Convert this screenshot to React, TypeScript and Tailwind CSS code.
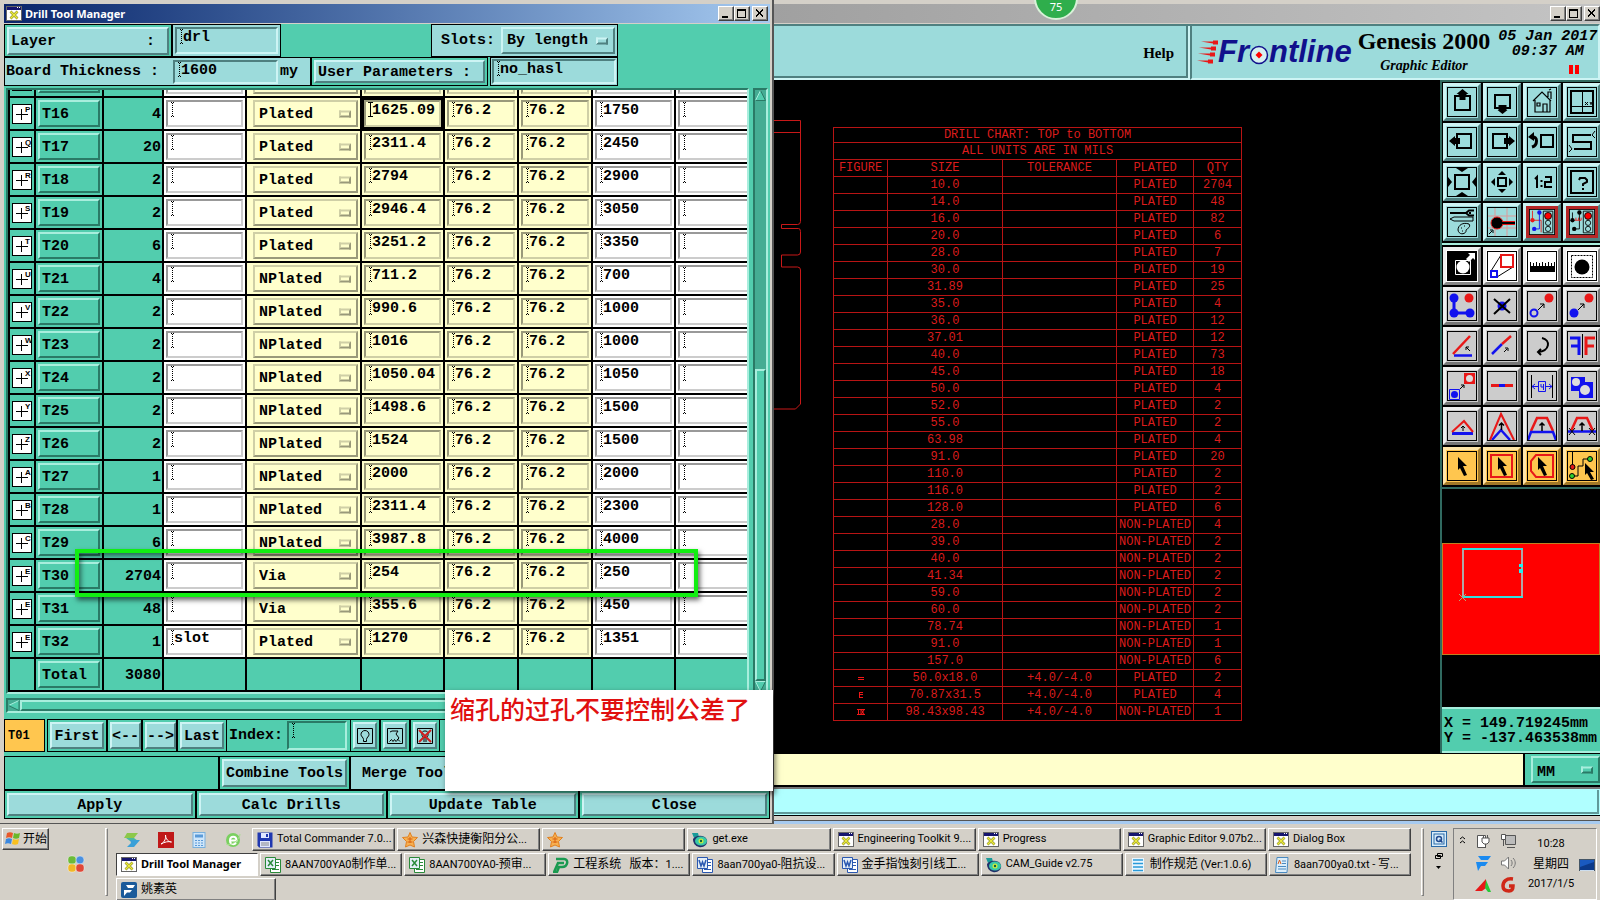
import React from "react";
import clsx from "clsx";

interface ToolRow {
  id: string;
  mark: string;
  qty: string;
  note?: string;
  type: string;
  size: string;
  bit: string;
}

const TOOLS: ToolRow[] = [
  { id: "", mark: "", qty: "", type: "", size: "", bit: "" },
  { id: "T16", mark: "P", qty: "4", type: "Plated", size: "1625.09", bit: "1750" },
  { id: "T17", mark: "Q", qty: "20", type: "Plated", size: "2311.4", bit: "2450" },
  { id: "T18", mark: "R", qty: "2", type: "Plated", size: "2794", bit: "2900" },
  { id: "T19", mark: "S", qty: "2", type: "Plated", size: "2946.4", bit: "3050" },
  { id: "T20", mark: "T", qty: "6", type: "Plated", size: "3251.2", bit: "3350" },
  { id: "T21", mark: "U", qty: "4", type: "NPlated", size: "711.2", bit: "700" },
  { id: "T22", mark: "V", qty: "2", type: "NPlated", size: "990.6", bit: "1000" },
  { id: "T23", mark: "W", qty: "2", type: "NPlated", size: "1016", bit: "1000" },
  { id: "T24", mark: "X", qty: "2", type: "NPlated", size: "1050.04", bit: "1050" },
  { id: "T25", mark: "Y", qty: "2", type: "NPlated", size: "1498.6", bit: "1500" },
  { id: "T26", mark: "Z", qty: "2", type: "NPlated", size: "1524", bit: "1500" },
  { id: "T27", mark: "A", qty: "1", type: "NPlated", size: "2000", bit: "2000" },
  { id: "T28", mark: "B", qty: "1", type: "NPlated", size: "2311.4", bit: "2300" },
  { id: "T29", mark: "C", qty: "6", type: "NPlated", size: "3987.8", bit: "4000" },
  { id: "T30", mark: "E", qty: "2704", type: "Via", size: "254", bit: "250" },
  { id: "T31", mark: "E", qty: "48", type: "Via", size: "355.6", bit: "450" },
  { id: "T32", mark: "E", qty: "1", note: "slot", type: "Plated", size: "1270", bit: "1351" },
];

// size, tolerance, plated, qty
const CHART: [string, string, string, string][] = [
  ["10.0", "", "PLATED", "2704"],
  ["14.0", "", "PLATED", "48"],
  ["16.0", "", "PLATED", "82"],
  ["20.0", "", "PLATED", "6"],
  ["28.0", "", "PLATED", "7"],
  ["30.0", "", "PLATED", "19"],
  ["31.89", "", "PLATED", "25"],
  ["35.0", "", "PLATED", "4"],
  ["36.0", "", "PLATED", "12"],
  ["37.01", "", "PLATED", "12"],
  ["40.0", "", "PLATED", "73"],
  ["45.0", "", "PLATED", "18"],
  ["50.0", "", "PLATED", "4"],
  ["52.0", "", "PLATED", "2"],
  ["55.0", "", "PLATED", "2"],
  ["63.98", "", "PLATED", "4"],
  ["91.0", "", "PLATED", "20"],
  ["110.0", "", "PLATED", "2"],
  ["116.0", "", "PLATED", "2"],
  ["128.0", "", "PLATED", "6"],
  ["28.0", "", "NON-PLATED", "4"],
  ["39.0", "", "NON-PLATED", "2"],
  ["40.0", "", "NON-PLATED", "2"],
  ["41.34", "", "NON-PLATED", "2"],
  ["59.0", "", "NON-PLATED", "2"],
  ["60.0", "", "NON-PLATED", "2"],
  ["78.74", "", "NON-PLATED", "1"],
  ["91.0", "", "NON-PLATED", "1"],
  ["157.0", "", "NON-PLATED", "6"],
  ["50.0x18.0", "+4.0/-4.0", "PLATED", "2"],
  ["70.87x31.5", "+4.0/-4.0", "PLATED", "4"],
  ["98.43x98.43", "+4.0/-4.0", "NON-PLATED", "1"],
];

const MONO = "font-['Liberation_Mono',monospace] text-[15px] leading-[15px] font-bold";
const UI = "font-['Roboto','Noto_Sans_CJK_SC',sans-serif] text-[11px]";

// Motif bevels, one pair for each colour family
const TEAL_UP = "border-2 border-t-[#a8eedd] border-l-[#a8eedd] border-b-[#2a7a66] border-r-[#2a7a66]";
const TEAL_IN = "border-2 border-t-[#2a7a66] border-l-[#2a7a66] border-b-[#a8eedd] border-r-[#a8eedd]";
const BLUE_UP = "border-2 border-t-[#cdf4f4] border-l-[#cdf4f4] border-b-[#4f8080] border-r-[#4f8080]";
const BLUE_IN = "border-2 border-t-[#4f8080] border-l-[#4f8080] border-b-[#cdf4f4] border-r-[#cdf4f4]";
const YELLOW_UP = "border-2 border-t-[#cfcfa6] border-l-[#cfcfa6] border-b-[#99997a] border-r-[#99997a]";
const YELLOW_IN = "border-2 border-t-[#99997a] border-l-[#99997a] border-b-[#cfcfa6] border-r-[#cfcfa6]";
const WHITE_IN = "border-2 border-t-[#999] border-l-[#999] border-b-[#ccc] border-r-[#ccc]";
const WIN_UP = "border border-t-white border-l-white border-b-[#404040] border-r-[#404040] shadow-[inset_-1px_-1px_0_#808080]";

const Caret = ({ active }: { active?: boolean }) => (
  <svg className="h-[15px] w-[5px] shrink-0" viewBox="0 0 5 15" fill="none" stroke="#000" shapeRendering="crispEdges">
    {active ? (
      <path d="M0 .5h5M2.500 1v13M0 14.500h5" />
    ) : (
      <path d="M1 .5h1M3 .5h1M2.500 1v13M1 14.500h1M3 14.500h1" strokeDasharray="1 1" />
    )}
  </svg>
);

interface FieldProps {
  label: string;
  value?: string;
  className: string;
  active?: boolean;
}

const Field: React.FC<FieldProps> = ({ label, value = "", className, active }) => (
  <div className={clsx("flex items-start pl-0.5", className)}>
    <Caret active={active} />
    <input
      aria-label={label}
      defaultValue={value}
      className={clsx("-ml-px h-[17px] w-full min-w-0 bg-transparent p-0 outline-none", MONO)}
    />
  </div>
);

interface PickProps {
  label: string;
  value: string;
  className: string;
  knob: string;
}

const Pick: React.FC<PickProps> = ({ label, value, className, knob }) => (
  <div className={clsx("relative", className)}>
    <select aria-label={label} className={clsx("h-full w-full appearance-none bg-transparent pl-1 outline-none", MONO)}>
      <option>{value}</option>
    </select>
    <span className={clsx("pointer-events-none absolute top-1/2 right-[5px] h-[7px] w-3 -translate-y-1/2", knob)} />
  </div>
);

const XIcon = () => (
  <svg className="h-[15px] w-4 shrink-0" viewBox="0 0 16 15">
    <rect x=".5" y=".5" width="15" height="14" fill="#fff" stroke="#666" />
    <rect x="1" y="1" width="14" height="3" fill="#15156e" />
    <path d="M11 1.500h1M13 1.500h1" stroke="#fff" />
    <path d="M4.500 5.500l7 7M11.500 5.500l-7 7" stroke="#8d8d2a" strokeWidth="2.600" />
    <path d="M4.500 5.500l7 7M11.500 5.500l-7 7" stroke="#ecec3c" strokeWidth="1.400" />
  </svg>
);

const WindowButtons = () => (
  <div className="flex items-center">
    {["min", "max", "close"].map((kind) => (
      <button
        key={kind}
        aria-label={kind}
        className={clsx("flex h-[15px] w-4 items-center justify-center bg-[#d4d0c8]", WIN_UP, kind === "close" && "ml-0.5")}
      >
        <svg className="h-[11px] w-3" viewBox="0 0 12 11" fill="none" stroke="#000" shapeRendering="crispEdges">
          {kind === "min" && <path d="M2 9h6" strokeWidth="2" />}
          {kind === "max" && <path d="M1.500 1.500h8v8h-8zM1 2h9" />}
          {kind === "close" && <path d="M2 1.500l7 7M9 1.500l-7 7" strokeWidth="2" />}
        </svg>
      </button>
    ))}
  </div>
);

const ToolTable = () => {
  const td = "border-t-2 border-l-2 border-black p-0";
  return (
    <table className={clsx("w-[782px] table-fixed border-separate border-spacing-0 border-b-2 border-black", MONO)}>
      <colgroup>
        <col className="w-[26px]" />
        <col className="w-[68px]" />
        <col className="w-[60px]" />
        <col className="w-[83px]" />
        <col className="w-[115px]" />
        <col className="w-[83px]" />
        <col className="w-[74px]" />
        <col className="w-[74px]" />
        <col className="w-[83px]" />
        <col className="w-[116px]" />
      </colgroup>
      <tbody>
        {TOOLS.map((t, i) => (
          <tr key={i} className="h-[33px]">
            <td className={td}>
              <svg className="mx-auto h-5 w-5" viewBox="0 0 20 20" fill="#fff" stroke="#000">
                <rect x=".5" y=".5" width="19" height="19" />
                <path d="M4 10.500h12M9.500 5v11" />
                <text x="13" y="8" fontSize="8" stroke="none" fill="#000" fontFamily="Liberation Sans">
                  {t.mark}
                </text>
              </svg>
            </td>
            <td className={clsx(td, "px-0.5")}>
              <button className={clsx("h-[27px] w-[62px] pt-px pl-0.5 text-left", TEAL_UP)}>{t.id}</button>
            </td>
            <td className={clsx(td, "pt-px pr-px text-right")}>{t.qty}</td>
            <td className={clsx(td, "bg-white px-0.5")}>
              <Field label={t.id + " note"} value={t.note} className={clsx("h-[27px]", WHITE_IN)} />
            </td>
            <td className={clsx(td, "bg-[#ffffcc] pr-0.5 pl-1.5")}>
              <Pick label={t.id + " type"} value={t.type} className={clsx("h-[27px] pt-px", YELLOW_UP)} knob={YELLOW_UP} />
            </td>
            <td className={clsx(td, "px-0.5", i === 1 ? "bg-black" : "bg-[#ffffcc]")}>
              <Field label={t.id + " size"} value={t.size} active={i === 1} className={clsx("h-[27px] bg-[#ffffcc]", YELLOW_IN)} />
            </td>
            <td className={clsx(td, "bg-[#ffffcc] px-0.5")}>
              <Field label={t.id + " plus"} value={i ? "76.2" : ""} className={clsx("h-[27px]", YELLOW_IN)} />
            </td>
            <td className={clsx(td, "bg-[#ffffcc] px-0.5")}>
              <Field label={t.id + " minus"} value={i ? "76.2" : ""} className={clsx("h-[27px]", YELLOW_IN)} />
            </td>
            <td className={clsx(td, "bg-white px-0.5")}>
              <Field label={t.id + " drill"} value={t.bit} className={clsx("h-[27px]", WHITE_IN)} />
            </td>
            <td className={clsx(td, "bg-white px-0.5")}>
              <Field label={t.id + " extra"} className={clsx("h-[27px]", WHITE_IN)} />
            </td>
          </tr>
        ))}
        <tr className="h-[33px]">
          <td className={td} />
          <td className={clsx(td, "px-0.5")}>
            <button className={clsx("h-[27px] w-[62px] pt-px pl-0.5 text-left", TEAL_UP)}>Total</button>
          </td>
          <td className={clsx(td, "pt-px pr-px text-right")}>3080</td>
          {[0, 1, 2, 3, 4, 5, 6].map((n) => (
            <td key={n} className={td} />
          ))}
        </tr>
      </tbody>
    </table>
  );
};

interface KeyProps {
  children: React.ReactNode;
  className?: string;
}

// light blue push button inside its black outline
const Key: React.FC<KeyProps> = ({ children, className }) => (
  <div className={clsx("flex border border-black bg-[#52cdae] p-0.5", className)}>
    <button className={clsx("flex flex-1 items-center justify-center bg-[#9cdbdb] pt-px whitespace-nowrap", BLUE_UP)}>
      {children}
    </button>
  </div>
);

const DrillToolManager = () => (
  <section className="absolute top-0 left-0 flex w-[774px] flex-col border-r-2 border-b border-[#555] bg-[#d4d0c8] pt-1 pr-0.5 pb-1 pl-1">
    <header className="mb-px flex h-[19px] items-center bg-linear-to-r from-[#0a246a] to-[#a6caf0] px-0.5">
      <XIcon />
      <h1 className="ml-[3px] flex-1 pt-px font-['Noto_Sans'] text-[11px] font-bold text-white">Drill Tool Manager</h1>
      <WindowButtons />
    </header>

    <div className={clsx("bg-[#52cdae]", MONO)}>
      <div className="flex h-[33px]">
        <div className="w-[168px] border border-black p-0.5">
          <button className={clsx("flex h-[28px] w-full items-center justify-between bg-[#9cdbdb] pr-3 pl-0.5", BLUE_UP)}>
            <span>Layer</span>
            <span>:</span>
          </button>
        </div>
        <div className="w-[109px] border border-black bg-[#9cdbdb] p-0.5">
          <Field label="Layer" value="drl" className={clsx("h-full", BLUE_IN)} />
        </div>
        <div className="ml-[150px] flex w-[187px] items-center border border-black bg-[#9cdbdb] pr-0.5 pl-[9px]">
          <span className="w-[60px]">Slots:</span>
          <Pick label="Slots" value="By length" className={clsx("h-[27px] flex-1", BLUE_UP)} knob={BLUE_UP} />
        </div>
      </div>

      <div className="flex h-[29px]">
        <div className="flex w-[307px] items-center border border-black bg-[#9cdbdb] pl-px">
          <span className="w-[167px]">Board Thickness :</span>
          <Field label="Board Thickness" value="1600" className={clsx("h-6 w-[105px]", BLUE_IN)} />
          <span className="ml-0.5">my</span>
        </div>
        <Key className="w-[177px]"><span className="flex-1 pl-0.5 text-left">User Parameters :</span></Key>
        <div className="ml-0.5 w-[128px] border border-black bg-[#9cdbdb] p-px">
          <Field label="User Parameters" value="no_hasl" className={clsx("h-full", BLUE_IN)} />
        </div>
      </div>

      <div className="mt-0.5 flex gap-1 px-0.5">
        <div className={clsx("flex h-[606px] flex-1 flex-col justify-end overflow-hidden", TEAL_IN)}>
          <ToolTable />
        </div>
        <div className={clsx("flex w-[15px] flex-col bg-[#45ac93]", TEAL_IN)}>
          <svg className="h-[11px] w-[11px]" viewBox="0 0 11 11" fill="#52cdae">
            <path d="M5.500 .5L10.500 10.500H.5z" />
            <path d="M5.500 .5L.5 10.500" stroke="#a8eedd" />
            <path d="M5.500 .5L10.500 10.500H.5" fill="none" stroke="#2a7a66" />
          </svg>
          <div className="flex-[27]" />
          <div className={clsx("flex-[31] bg-[#52cdae]", TEAL_UP)} />
          <svg className="h-[11px] w-[11px]" viewBox="0 0 11 11" fill="#52cdae">
            <path d="M.5 .5h10L5.500 10.500z" />
            <path d="M10.500 .5H.5L5.500 10.500" fill="none" stroke="#a8eedd" />
            <path d="M10.500 .5L5.500 10.500" stroke="#2a7a66" />
          </svg>
        </div>
      </div>

      <div className={clsx("mt-1 mr-[21px] ml-0.5 flex h-[15px] bg-[#45ac93]", TEAL_IN)}>
        <svg className="h-[11px] w-3" viewBox="0 0 12 11" fill="#52cdae">
          <path d="M.5 5.500L11 .5v10z" />
          <path d="M.5 5.500L11 .5" stroke="#a8eedd" />
          <path d="M.5 5.500l10.500 5V.5" fill="none" stroke="#2a7a66" />
        </svg>
        <div className={clsx("flex-1 bg-[#52cdae]", TEAL_UP)} />
      </div>

      <div className="mt-1.5 flex h-[33px]">
        <div className="mr-0.5 flex w-[41px] items-center border border-black bg-[#ffc64f] pl-[3px] text-xs">T01</div>
        <Key className="w-[60px]">First</Key>
        <Key className="w-[35px]">&lt;--</Key>
        <Key className="w-[35px]">--&gt;</Key>
        <Key className="w-[50px]">Last</Key>
        <div className="flex w-[123px] items-center border-y border-black pl-0.5">
          <span className="w-[58px]">Index:</span>
          <Field label="Index" className={clsx("h-[29px] w-[60px]", TEAL_IN)} />
        </div>
        <Key className="w-[30px]">
          <svg className="h-4 w-4 shrink-0" viewBox="0 0 16 16" fill="none" stroke="#000">
            <path d="M.5 .5h15v15H.5z" />
            <path d="M8 2.500c-2.500 0-4 2-4 4 0 2 2.500 3 2.500 5v2h3v-2c0-2 2.500-3 2.500-5 0-2-1.500-4-4-4z" />
          </svg>
        </Key>
        <Key className="w-[30px]">
          <svg className="h-4 w-4 shrink-0" viewBox="0 0 16 16" fill="none" stroke="#000">
            <path d="M.5 .5h15v15H.5z" />
            <path d="M3 4l2-1h6l-2 3 3 4-2 2M2.500 13.500l2-2 1.500 2 1.500-2 1.500 2 2-2 2 2" />
          </svg>
        </Key>
        <Key className="w-[30px]">
          <svg className="h-4 w-4 shrink-0" viewBox="0 0 16 16" fill="none" stroke="#000">
            <path d="M.5 .5h15v15H.5z" />
            <path d="M5 4.500c1-2 5-2 6 0v3l-1.500 2h-3L5 7.500zM7 10v4M9 10v4" />
            <path d="M2 2l12 12M14 2L2 14" stroke="#d02020" strokeWidth="2" />
          </svg>
        </Key>
        <div className="flex-1 border-y border-black" />
      </div>

      <div className="mt-1 flex h-[34px]">
        <div className="w-[215px] border border-black" />
        <Key className="w-[131px]">Combine Tools</Key>
        <div className="flex flex-1 items-center border border-black bg-[#9cdbdb] pt-px pl-[11px]">Merge Tools</div>
      </div>

      <div className="grid h-[29px] grid-cols-4">
        <Key>Apply</Key>
        <Key>Calc Drills</Key>
        <Key>Update Table</Key>
        <Key>Close</Key>
      </div>
    </div>

    {/* markup laid over the dialog */}
    <div className="pointer-events-none absolute top-[549px] left-[75px] h-[48px] w-[623px] border-4 border-[#12ee12] shadow-[2px_3px_5px_rgba(0,0,0,0.6),inset_2px_3px_5px_rgba(0,0,0,0.5)]" />
    <div className="absolute top-[690px] left-[445px] h-[101px] w-[328px] bg-white pt-0.5 pl-[5px] font-['Noto_Sans_CJK_SC',sans-serif] text-[25px] leading-8 font-medium whitespace-nowrap text-[#e01010] shadow-[2px_3px_6px_rgba(0,0,0,0.6)]">
      缩孔的过孔不要控制公差了
    </div>
  </section>
);

const B = "#1212ee";
const R = "#e81818";

const CURSOR = "M11 6l9 9-4 0 4 9-3 1-4-8-2 2z";

const NAV_ICONS: { name: string; red?: boolean; art: React.ReactNode }[] = [
  { name: "pan up", art: <><path d="M8 9h15v14H8z" fill="none" stroke="#000" strokeWidth="2" /><path d="M15.500 2l6 5h-2v1h-1v5h-6V8h-1V7h-2z" /></> },
  { name: "pan down", art: <><path d="M8 8h15v13H8z" fill="none" stroke="#000" strokeWidth="2" /><path d="M15.500 27l5-4h-1v-5h-8v5h-1z" /></> },
  { name: "home", art: <path d="M6 14l9-9 9 9M8 13v12h15V13M10 16h3v3h-3zM16 25v-8h4v8M21 10V5h3v7M22 3l2-1" fill="none" stroke="#000" strokeWidth="1.200" /> },
  { name: "zoom window", art: <><path d="M4 4h22v22H4z" fill="none" stroke="#000" strokeWidth="2" /><path d="M15.500 4v22M4 19.500h22M18 15l3 3M21 15l-3 3M23 15l1 2 1-2M24 17v1" fill="none" stroke="#000" /></> },
  { name: "pan left", art: <><path d="M10 7h14v14H10z" fill="none" stroke="#000" strokeWidth="2" /><path d="M2 14l6-5v2h5v6H8v2z" /></> },
  { name: "pan right", art: <><path d="M6 7h14v14H6z" fill="none" stroke="#000" strokeWidth="2" /><path d="M28 14l-6-5v2h-5v6h5v2z" /></> },
  { name: "previous view", art: <><path d="M14 8h12v12H14z" fill="none" stroke="#000" strokeWidth="2" /><path d="M5 10c6-1 6 8 0 10" fill="none" stroke="#000" strokeWidth="3" /><path d="M7 5v9l-6-4z" /></> },
  { name: "snake view", art: <><path d="M24 8H6v7h18v7H7" fill="none" stroke="#000" strokeWidth="2" /><path d="M28 4l-3 4 3 3M2 18l3 4-3 3" fill="none" stroke="#000" /></> },
  { name: "zoom out", art: <><path d="M8 8h14v14H8z" fill="none" stroke="#000" strokeWidth="2" /><path d="M9 1h12l-6 4zM9 29h12l-6-4zM1 10l4 5-4 5zM29 10l-4 5 4 5z" /></> },
  { name: "zoom in", art: <><path d="M11 11h8v8h-8z" fill="none" stroke="#000" strokeWidth="2" /><path d="M15 4l4 4h-8zM15 26l4-4h-8zM4 15l4-4v8zM26 15l-4-4v8z" /></> },
  { name: "one to two", art: <path d="M8 12l2-2v11M14.500 13v2M14.500 18v2M18 10h6v5h-6v5h7" fill="none" stroke="#000" strokeWidth="2" /> },
  { name: "help", art: <><path d="M4 4h22v22H4z" fill="none" stroke="#000" strokeWidth="2" /><path d="M12 13l1-2h5l2 2v2l-4 2v2M16 21v2" fill="none" stroke="#000" strokeWidth="2" /></> },
  { name: "setup", art: <><path d="M3 6h16" stroke="#000" strokeWidth="2" /><path d="M27 3.500h-5l-3 2.500 3 2.500h5M22 6h2" fill="none" stroke="#000" strokeWidth="2" /><path d="M3 12l4-2h19v4H7zM11 23c0-5 5-8 11-6 2 3-1 4-3 6 1 4-7 6-8 0zM14 21h1M17 19h1M15 24h1" fill="none" stroke="#000" /></> },
  { name: "snap", art: <><path d="M8 1v28M20 1v28M1 9h28M1 21h28" stroke="#d99" fill="none" /><path d="M10 16h18" stroke={R} strokeWidth="4" /><circle cx="10" cy="16" r="6" stroke={R} /><path d="M10 16h18" stroke="#000" strokeWidth="2" /><path d="M2 27l3-3M3 23h3v3" stroke="#000" fill="none" /></> },
  { name: "net compare", red: true, art: <><path d="M4 2v11h10v14" fill="none" stroke={R} /><path d="M12 4v19H6" fill="none" stroke={B} /><circle cx="12" cy="4" r="2.500" fill={B} /><circle cx="4" cy="13" r="2.500" fill={R} /><circle cx="6" cy="23" r="2.500" fill={B} /><path d="M16.500 2.500h11v25h-11z" fill="none" stroke="#000" /><circle cx="22" cy="8" r="4" fill="red" stroke="#000" /><circle cx="22" cy="16" r="3" fill="#9cdbdb" stroke="#000" /><circle cx="22" cy="23" r="3" fill="#9cdbdb" stroke="#000" /></> },
  { name: "net check", red: true, art: <><path d="M12 4v19H6M4 4v10" fill="none" stroke="#000" /><path d="M6 13h8M8 10v3M11 10v3M14 10v3" fill="none" stroke={R} /><circle cx="12" cy="4" r="2.500" /><circle cx="4" cy="13" r="2.500" /><circle cx="6" cy="23" r="2.500" /><path d="M16.500 2.500h11v25h-11z" fill="none" stroke="#000" /><circle cx="22" cy="8" r="4" fill="red" stroke="#000" /><circle cx="22" cy="16" r="3" fill="#9cdbdb" stroke="#000" /><circle cx="22" cy="23" r="3" fill="#9cdbdb" stroke="#000" /></> },
];

const SMALL_ARROW = <path d="M11 19l6-6M13 13h4v4" fill="none" stroke="#000" />;
const UP_ARROW = <path d="M15 20v-8M12.500 14.500L15 12l2.500 2.500" fill="none" stroke="#000" strokeWidth="1.500" />;

const EDIT_ICONS: { name: string; tone: "white" | "gray" | "orange"; art: React.ReactNode }[] = [
  { name: "negative", tone: "white", art: <><path d="M0 0h30v30H0z" /><path d="M8.500 9.500h15v14h-15z" fill="none" stroke="#fff" /><circle cx="16" cy="16" r="6.500" fill="#fff" /><path d="M19 8l4-4-2-2h7v7l-2-2-4 4z" fill="#fff" /></> },
  { name: "resize", tone: "white", art: <><path d="M4 20L14 4M10 26l16-10" stroke="#000" /><path d="M14 4h12v12H14z" fill="none" stroke={R} strokeWidth="2" /><path d="M4 20h6v6H4z" fill="none" stroke={B} strokeWidth="2" /></> },
  { name: "measure", tone: "white", art: <><path d="M3 15h25v6H3z" /><path d="M3.500 11v5M6.500 12v4M9.500 11v5M12.500 12v4M15.500 11v5M18.500 12v4M21.500 11v5M24.500 12v4M27.500 11v5" stroke="#000" /></> },
  { name: "mask", tone: "white", art: <><circle cx="15" cy="16" r="7.500" /><path d="M4.500 4.500h21v22h-21z" fill="none" stroke="#000" strokeDasharray="2 1" /></> },
  { name: "break", tone: "gray", art: <><path d="M7 7v15h16" fill="none" stroke={B} strokeWidth="3" /><g fill={B}><circle cx="7" cy="7" r="4.500" /><circle cx="7" cy="22" r="4.500" /><circle cx="23" cy="22" r="4.500" /></g><circle cx="22" cy="7" r="4.500" fill={R} /></> },
  { name: "delete", tone: "gray", art: <><circle cx="15" cy="15" r="4.500" fill={B} /><path d="M7 8l16 14M23 8L7 23" stroke="#000" strokeWidth="2" /></> },
  { name: "copy", tone: "gray", art: <><circle cx="22" cy="7" r="4.500" fill={R} /><circle cx="7" cy="22" r="3.500" fill="none" stroke={B} strokeWidth="2" />{SMALL_ARROW}</> },
  { name: "move", tone: "gray", art: <><circle cx="22" cy="7" r="4.500" fill={R} /><circle cx="7" cy="22" r="4.500" fill={B} />{SMALL_ARROW}</> },
  { name: "angle", tone: "gray", art: <><path d="M7 24.500h18" stroke={B} strokeWidth="2.500" /><path d="M6 23L23 5" stroke={R} strokeWidth="2.500" /><path d="M23 20l-4-4M19 19v-3h3" fill="none" stroke="#000" /></> },
  { name: "stretch", tone: "gray", art: <><path d="M5 23l10-10" stroke={B} strokeWidth="2.500" /><path d="M15 13l9-8" stroke={R} strokeWidth="2.500" /><path d="M17 21l3-3M18 17h3v3" fill="none" stroke="#000" /></> },
  { name: "rotate", tone: "gray", art: <path d="M15 7c9 2 8 13-4 14M14 18l-3 3 3 3" fill="none" stroke="#000" strokeWidth="2" /> },
  { name: "mirror", tone: "gray", art: <><path d="M3 7h9v17M4 15h8" fill="none" stroke={B} strokeWidth="3" /><path d="M15.500 3v24" stroke="#000" /><path d="M28 7h-9v17M27 15h-8" fill="none" stroke={R} strokeWidth="3" /></> },
  { name: "transform", tone: "gray", art: <><path d="M17 2h11v11H17z" fill={R} /><circle cx="22.500" cy="7.500" r="3.500" fill="#ddd" /><path d="M2.500 18.500h10v10h-10z" fill="none" stroke={B} /><circle cx="7.500" cy="23.500" r="3.500" fill={B} /><path d="M13 18l4-4M14 14h3v3" fill="none" stroke="#000" /></> },
  { name: "line", tone: "gray", art: <><path d="M4 14.500h22" stroke={R} strokeWidth="3" /><path d="M12 14.500h6" stroke={B} strokeWidth="3" /></> },
  { name: "gap", tone: "gray", art: <><path d="M4.500 4v23M25.500 4v23" stroke="#000" /><path d="M5 15.500h20M8 13l-3 2.500L8 18M22 13l3 2.500-3 2.500" fill="none" stroke={B} /><path d="M11.500 10.500h7v10h-7z" fill="#ccc" stroke={B} /><path d="M14 13v3h3M16.500 13v6" fill="none" stroke={B} /></> },
  { name: "surface", tone: "gray", art: <><path d="M4 6h14v5h8v16H12v-7H4z" fill={B} /><circle cx="9" cy="11" r="4" fill="#ddd" /><circle cx="18" cy="19" r="5" fill="#ddd" /></> },
  { name: "triangle", tone: "gray", art: <><path d="M5 22.500h21" stroke={B} strokeWidth="3" /><path d="M5 21L17 10l9 11" fill="none" stroke={R} strokeWidth="2" /><path d="M16 20v-5M14 17l2-2 2 2" fill="none" stroke="#000" /></> },
  { name: "peak", tone: "gray", art: <><path d="M5 29l9-10 9 10" fill="none" stroke={B} strokeWidth="2.500" /><path d="M3 29L14 3l13 26" fill="none" stroke={R} strokeWidth="2" /><path d="M14.500 19v-7M12 14.500l2.500-2.500 2.500 2.500" fill="none" stroke="#000" strokeWidth="1.500" /></> },
  { name: "taper", tone: "gray", art: <><path d="M4 20L10 7h10l6 13" fill="none" stroke={R} strokeWidth="2.500" /><path d="M1 29l3-8h22l3 8" fill="none" stroke={B} strokeWidth="2.500" />{UP_ARROW}</> },
  { name: "taper cut", tone: "gray", art: <><path d="M4 20L10 7h10l6 13" fill="none" stroke={R} strokeWidth="2.500" /><path d="M1 20.500h28" stroke={B} strokeWidth="2.500" /><path d="M2 17l6 7M8 17l-6 7M22 17l6 7M28 17l-6 7" stroke="#000" />{UP_ARROW}</> },
  { name: "select", tone: "orange", art: <path d={CURSOR} /> },
  { name: "select frame", tone: "orange", art: <><path d="M4 4h21v22H4z" fill="none" stroke={R} strokeWidth="2" /><path d={CURSOR} /></> },
  { name: "select polygon", tone: "orange", art: <><path d="M9 4h17v22H9l-5-6V10z" fill="none" stroke={R} strokeWidth="2" /><path d={CURSOR} /></> },
  { name: "select net", tone: "orange", art: <><path d="M5.500 1v14M5 25h6V15h5V8h7" fill="none" stroke="#000" /><circle cx="5.500" cy="16" r="2.500" fill={R} stroke="#000" /><circle cx="23" cy="8" r="2.500" fill="#2fd02f" stroke="#000" /><circle cx="5" cy="25" r="2.500" fill="#2fd02f" stroke="#000" /><path d="M18 12l9 9-4 0 4 7-3 1-4-7-2 2z" /></> },
];

interface ToolButtonProps {
  name: string;
  className: string;
  svg?: string;
  children: React.ReactNode;
}

const ToolButton: React.FC<ToolButtonProps> = ({ name, className, svg, children }) => (
  <button aria-label={name} className={clsx("flex h-[38px] w-[38px] items-center justify-center border-[3px]", className)}>
    <svg className={clsx("h-[30px] w-[30px] shrink-0", svg)} viewBox="0 0 30 30">
      {children}
      <rect x=".5" y=".5" width="29" height="29" fill="none" stroke="#000" />
    </svg>
  </button>
);

const TONES = {
  white: "bg-white border-t-[#eee] border-l-[#eee] border-b-[#888] border-r-[#888]",
  gray: "bg-[#cccccc] border-t-[#eee] border-l-[#eee] border-b-[#777] border-r-[#777]",
  orange: "bg-[#ffc64f] border-t-[#ffe5a8] border-l-[#ffe5a8] border-b-[#a07828] border-r-[#a07828]",
};

const Logo = () => (
  <div className="flex h-full items-center">
    <svg className="h-6 w-[22px] shrink-0" viewBox="0 0 22 24" fill={R}>
      <path d="M4 1.500h12V.5h5v4h-5v-1zM2 7.500h12v-1h5v4h-5v-1zM1 13.500h12v-1h5v4h-5v-1zM0 20.500h11v-1h5v4h-5v-1z" />
    </svg>
    <span className="-ml-px flex items-center font-['Liberation_Sans',sans-serif] text-[31px] leading-8 font-bold text-[#10108c] italic">
      Fr
      <svg className="mb-[3px] h-5 w-5 self-end" viewBox="0 0 20 20">
        <circle cx="10" cy="10" r="8.500" fill="#d6f0f0" stroke="#10108c" strokeWidth="1.500" />
        <path d="M10 6.500l3.500 3.500-3.500 3.500L6.500 10z" fill="red" />
      </svg>
      ntline
    </span>
  </div>
);

const DrillChart = () => {
  const cell = "border border-[#b81414] p-0";
  return (
    <table className="absolute top-[47px] left-[833px] w-[408px] table-fixed border-collapse text-center font-['Liberation_Mono',monospace] text-xs leading-3 whitespace-nowrap text-[#dc1c1c]">
      <colgroup>
        <col className="w-[54px]" />
        <col className="w-[115px]" />
        <col className="w-[114px]" />
        <col className="w-[77px]" />
        <col className="w-[48px]" />
      </colgroup>
      <thead>
        <tr className="h-[15px]">
          <th colSpan={5} className={clsx(cell, "font-normal")}>DRILL CHART: TOP to BOTTOM</th>
        </tr>
        <tr className="h-[17px]">
          <th colSpan={5} className={clsx(cell, "font-normal")}>ALL UNITS ARE IN MILS</th>
        </tr>
        <tr className="h-[17px]">
          {["FIGURE", "SIZE", "TOLERANCE", "PLATED", "QTY"].map((h) => (
            <th key={h} className={clsx(cell, "font-normal")}>{h}</th>
          ))}
        </tr>
      </thead>
      <tbody>
        {CHART.map(([size, tol, plated, qty], i) => (
          <tr key={i} className="h-[17px]">
            <td className={cell}>
              {i > 28 && (
                <svg className="mx-auto h-2 w-2.5" viewBox="0 0 10 8" fill="none" stroke="#f01818">
                  {i === 29 && <path d="M2 3.500h6M2 5.500h6" />}
                  {i === 30 && <path d="M3 1.500h4M3 3.500h4M3 6.500h4M3.500 1v6" />}
                  {i === 31 && <path d="M1 1.500h8M1 6.500h8M2.500 1v6M5 1v6M8.500 1L5 7M5 1l3.500 6" />}
                </svg>
              )}
            </td>
            <td className={cell}>{size}</td>
            <td className={cell}>{tol}</td>
            <td className={cell}>{plated}</td>
            <td className={cell}>{qty}</td>
          </tr>
        ))}
      </tbody>
    </table>
  );
};

const GraphicEditor = () => (
  <section className="flex flex-1 flex-col bg-[#d4d0c8] pt-1">
    <header className="mb-px flex h-[19px] items-center justify-end bg-linear-to-r from-[#808080] to-[#c4c4c4]">
      <WindowButtons />
    </header>

    <div className="flex h-14 bg-[#9cdbdb]">
      <div className="flex flex-1 items-center justify-end border-t-2 border-t-[#4f8080] pr-4 font-['Liberation_Serif',serif] text-[15px] font-bold shadow-[inset_-2px_-2px_0_#cdf4f4,inset_-4px_-4px_0_#4f8080]">
        <a href="#help">Help</a>
      </div>
      <div className={clsx("flex w-[410px] items-start pl-[5px]", BLUE_IN)}>
        <Logo />
        <div className="ml-1.5 flex flex-col items-center font-['Liberation_Serif',serif] font-bold whitespace-nowrap">
          <span className="text-2xl leading-[30px]">Genesis 2000</span>
          <span className="text-sm leading-5 italic">Graphic Editor</span>
        </div>
        <div className={clsx("ml-2 flex flex-col items-center pt-[3px] whitespace-nowrap italic", MONO)}>
          <span>05 Jan 2017</span>
          <span>09:37 AM</span>
          <span className="mt-1.5 flex gap-0.5 self-end pr-[18px]">
            <i className="h-[9px] w-1 bg-[#ff0000]" />
            <i className="h-[9px] w-1 bg-[#ff0000]" />
          </span>
        </div>
      </div>
    </div>

    <div className="flex flex-1 bg-black">
      <div className="relative flex-1 overflow-hidden">
        <svg className="absolute top-[40px] left-[772px] h-[292px] w-8" viewBox="0 0 32 292" fill="none" stroke="#c81818">
          <path d="M0 .5h28.500V101.500q0 3-3 3H9.500v4h17q2 0 2 3V132q0 3-3 3H9.500v12h16q3 0 3 3V284l-5 5H0M0 12.500h28" />
        </svg>
        <DrillChart />
      </div>
      <aside className="flex w-[160px] flex-col overflow-hidden border-l-2 border-[#306a60]">
        <div className="grid grid-cols-[repeat(4,38px)] gap-0.5 border-t-2 border-[#306a60] pt-px pl-px">
          {NAV_ICONS.map((icon) => (
            <ToolButton
              key={icon.name}
              name={icon.name}
              className={clsx("border-t-[#cdf4f4] border-l-[#cdf4f4] border-b-[#4f8080] border-r-[#4f8080]", icon.red ? "bg-[#b52626] ring-2 ring-[#b52626] ring-inset" : "bg-[#9cdbdb]")}
              svg={icon.red ? "bg-[#9cdbdb] border-2 border-[#b52626]" : ""}
            >
              {icon.art}
            </ToolButton>
          ))}
        </div>
        <div className="mt-0.5 grid grid-cols-[repeat(4,38px)] gap-0.5 border-t-2 border-[#a8eedd] pt-[2px] pl-px">
          {EDIT_ICONS.map((icon) => (
            <ToolButton key={icon.name} name={icon.name} className={TONES[icon.tone]}>
              {icon.art}
            </ToolButton>
          ))}
        </div>
        <div className="mt-0.5 flex flex-1 flex-col justify-center border-t-2 border-[#306a60] pt-0.5">
          <div className="h-[112px] border border-[#c08020] bg-[#ff0000]">
            <svg className="h-[110px] w-[157px] max-w-none" viewBox="0 0 157 110" fill="none" shapeRendering="crispEdges">
              <path d="M20 5v48M79 5v48" stroke="#b0a8a8" strokeWidth="2" />
              <path d="M19 5h61M19 53h61" stroke="#30e0e0" strokeWidth="2" />
              <path d="M76 20h4v3h-4zM76 25h4v4h-4z" fill="#20f0f0" />
              <path d="M16 50l7 7M23 50l-7 7" stroke="#c0a070" shapeRendering="auto" />
            </svg>
          </div>
        </div>
        <div className={clsx("h-[46px] border-y-2 border-t-[#a8eedd] border-b-[#a8eedd] bg-[#52cdae] pt-[7px] pl-0.5 whitespace-pre", MONO)}>
          <p>X = 149.719245mm</p>
          <p>Y = -137.463538mm</p>
        </div>
      </aside>
    </div>

    <div className="flex h-[34px] border-t border-b-2 border-black bg-[#52cdae]">
      <input aria-label="Command" className="min-w-0 flex-1 border-r-2 border-black bg-[#ffffcc] outline-none" />
      <div className="w-[75px] p-0.5 pr-0 pl-1.5">
        <Pick label="Units" value="MM" className={clsx("h-[27px] w-full", TEAL_UP)} knob={TEAL_UP} />
      </div>
    </div>
    <div className="h-[29px] border-t-2 border-b border-t-[#777] border-b-black bg-[#b0ffff] p-px">
      <div className="h-full border-r-2 border-b-2 border-[#609a9a]" />
    </div>
    <div className="h-[5px] border-b border-[#555]" />
    <div className="h-[3px] bg-[#a6caf0]" />

    <div className="absolute top-[-24px] left-[1034px] flex h-11 w-11 items-end justify-center rounded-full border-2 border-[#d8f0d8] bg-[#2fae4c] pb-1 font-['Noto_Sans'] text-[11px] leading-[14px] text-white">
      75
    </div>
  </section>
);

const StarIcon = () => (
  <svg className="h-4 w-4 shrink-0" viewBox="0 0 16 16">
    <path d="M8 .5l2 4.500 5.500 .5-4 4 1 5.500L8 13l-4.500 2 1-5.500-4-4L6 5z" fill="#f8b050" stroke="#e08020" />
    <path d="M5.500 7h5M5.500 10h5M8 5v6" stroke="#d86010" />
  </svg>
);

const EyeIcon = () => (
  <svg className="h-4 w-4 shrink-0" viewBox="0 0 16 16">
    <path d="M0 1l6 0 1 4-5 1z" fill="#189a9a" />
    <path d="M1 7c2-4 12-5 14 1 1 5-4 8-8 7-4-1-6-4-6-8z" fill="#20306a" />
    <ellipse cx="9" cy="9" rx="6" ry="4.500" fill="#38c8a8" />
    <circle cx="9" cy="9" r="2.500" fill="#c8f040" />
    <circle cx="9" cy="9" r="1.200" fill="#106040" />
  </svg>
);

const DocIcon = ({ color, mark }: { color: string; mark: string }) => (
  <svg className="h-4 w-4 shrink-0" viewBox="0 0 16 16">
    <path d="M5.500 2.500h10v13h-10z" fill="#fff" stroke={color} />
    <path d="M11 5.500h3M11 8.500h3M7 12.500h7" stroke={color} />
    <path d="M.5 .5h10v11H.5z" fill="#e4eef8" stroke={color} />
    <path d={mark} fill="none" stroke={color} strokeWidth="1.500" />
  </svg>
);

const ExcelIcon = () => <DocIcon color="#2a8a3a" mark="M3 3l5 6M8 3L3 9" />;
const WordIcon = () => <DocIcon color="#2a58b0" mark="M2 3l2 6 1.500-4L7 9l2-6" />;

const TASKS: { icon: React.ReactNode; label: string }[][] = [
  [
    { icon: <svg className="h-4 w-4 shrink-0" viewBox="0 0 16 16"><path d="M.5 .5h15v15H2l-1.500-2z" fill="#2038b0" /><path d="M4 1h8v5H4zM3 9h10v6H3z" fill="#dfe6ff" /><path d="M9 2h2v3H9z" fill="#2038b0" /><path d="M4 11h8M4 13h8" stroke="#888" /></svg>, label: "Total Commander 7.0..." },
    { icon: <StarIcon />, label: "兴森快捷衡阳分公..." },
    { icon: <StarIcon />, label: "" },
    { icon: <EyeIcon />, label: "get.exe" },
    { icon: <XIcon />, label: "Engineering Toolkit 9...." },
    { icon: <XIcon />, label: "Progress" },
    { icon: <XIcon />, label: "Graphic Editor 9.07b2..." },
    { icon: <XIcon />, label: "Dialog Box" },
  ],
  [
    { icon: <XIcon />, label: "Drill Tool Manager" },
    { icon: <ExcelIcon />, label: "8AAN700YA0制作单..." },
    { icon: <ExcelIcon />, label: "8AAN700YA0-预审..." },
    { icon: <svg className="h-4 w-4 shrink-0" viewBox="0 0 16 16"><path d="M3 2h8c5 0 4 8-2 8H6l-2 5H1l4-9h6" fill="none" stroke="#1a9a50" strokeWidth="2.500" /></svg>, label: "工程系统   版本：1...." },
    { icon: <WordIcon />, label: "8aan700ya0-阻抗设..." },
    { icon: <WordIcon />, label: "金手指蚀刻引线工..." },
    { icon: <EyeIcon />, label: "CAM_Guide v2.75" },
    { icon: <svg className="h-4 w-4 shrink-0" viewBox="0 0 16 16"><path d="M2 1h12v14H2z" fill="#e8f6ff" /><path d="M3 3h10M3 6.500h10M3 10h10M3 13.500h10" stroke="#2a9ad8" strokeWidth="1.500" /></svg>, label: "制作规范 (Ver:1.0.6)" },
    { icon: <svg className="h-4 w-4 shrink-0" viewBox="0 0 16 16"><path d="M3 .5h11l-1 15H1.500z" fill="#dceefa" stroke="#4a8ac0" /><path d="M4 7l1.500-4L7 7" fill="none" stroke="#d86020" /><path d="M8 4h4M8 6.500h4M4 9.500h8M4 12h8" stroke="#4a8ac0" /></svg>, label: "8aan700ya0.txt - 写..." },
  ],
  [
    { icon: <svg className="h-4 w-4 shrink-0" viewBox="0 0 16 16"><rect width="16" height="16" rx="2" fill="#1a5a9a" /><path d="M5 3h9l-2 3H7zM3 8h8l-2 2.500H6L3 14z" fill="#fff" /></svg>, label: "姚素英" },
  ],
];

const TaskButton = ({ icon, label, className }: { icon: React.ReactNode; label: string; className?: string }) => {
  const current = label === "Drill Tool Manager";
  return (
    <button
      className={clsx(
        "flex h-[23px] min-w-0 items-center gap-1 overflow-hidden border pl-1 whitespace-pre",
        current
          ? "border-t-[#404040] border-r-white border-b-white border-l-[#404040] bg-white font-['Noto_Sans'] font-bold"
          : "border-t-white border-r-[#404040] border-b-[#404040] border-l-white bg-[#d4d0c8] shadow-[inset_-1px_-1px_0_#808080]",
        className,
      )}
    >
      {icon}
      {/* Han characters run one size larger than the Latin ones */}
      <span>
        {label.split(/([\u4e00-\u9fff：]+)/).map((part, i) =>
          i % 2 ? <span key={i} className="text-xs">{part}</span> : part,
        )}
      </span>
    </button>
  );
};

const Taskbar = () => (
  <footer className={clsx("flex h-[76px] bg-[#d4d0c8] pt-1 text-black", UI)}>
    <button className={clsx("ml-0.5 flex h-[22px] w-[47px] items-center gap-0.5 pl-0.5", WIN_UP)}>
      <svg className="h-4 w-4 shrink-0" viewBox="0 0 16 16">
        <path d="M2 2c2-1 4-1 6 0L7 7C5 6 3 6 1 7z" fill="#e8582a" />
        <path d="M9 2c2 1 4 1 6 0l-1 5c-2 1-4 1-6 0z" fill="#6ab82a" />
        <path d="M1 8c2-1 4-1 6 0l-1 5c-2-1-4-1-6 0z" fill="#3a88e0" />
        <path d="M8 8c2 1 4 1 6 0l-1 5c-2 1-4 1-6 0z" fill="#f8c020" />
      </svg>
      <span className="text-xs">开始</span>
    </button>
    <svg className="mt-[27px] ml-[18px] h-[18px] w-[18px] shrink-0" viewBox="0 0 18 18" stroke="#fff" strokeWidth=".4">
      <rect x="1" y="1" width="8" height="8" rx="3" fill="#6cba3a" />
      <rect x="9" y="1" width="8" height="8" rx="4" fill="#4a90e0" />
      <rect x="1" y="9" width="8" height="8" rx="3" fill="#f0b828" />
      <rect x="9" y="9" width="8" height="8" rx="3" fill="#e04838" />
    </svg>
    <div className="mr-2 mb-1 ml-5 w-[3px] border border-t-white border-r-[#808080] border-b-[#808080] border-l-white" />

    <div className="flex flex-1 flex-col gap-0.5">
      <div className="flex">
        <div className="flex w-[136px] items-center justify-between pr-[11px] pl-2">
          <svg className="h-4 w-4" viewBox="0 0 16 16"><path d="M3 1h11l-4 5H0z" fill="#8cc84a" /><path d="M2 6h8l4 3H6z" fill="#4ab8a0" /><path d="M6 8h10l-6 7H3l4-4z" fill="#3aa0d8" /></svg>
          <svg className="h-4 w-4" viewBox="0 0 16 16"><rect width="16" height="16" fill="#c01818" /><path d="M3 12c4-2 5-6 4.500-9 0 4 3 7 6 7-3-1-7 0-10.500 2z" fill="none" stroke="#fff" /></svg>
          <svg className="h-4 w-4" viewBox="0 0 16 16"><rect x="2" y=".5" width="12" height="15" fill="#cfe6fa" stroke="#7ab0dc" /><path d="M4 2.500h8v3H4z" fill="#5a9ad8" /><path d="M4 8.500h8M4 11h8M4 13.500h8" stroke="#5a9ad8" strokeDasharray="2 1" /></svg>
          <svg className="h-4 w-4" viewBox="0 0 16 16" fill="none"><circle cx="8" cy="8" r="7" fill="#7ad060" /><path d="M5 8.500h6.500c0-5-6.500-5-6.500 0s5 4 6 2" stroke="#fff" strokeWidth="2" /><path d="M1 12C5 15 15 8 15 2" stroke="#a8e090" /></svg>
        </div>
        <div className="grid flex-1 grid-cols-8 gap-0.5">
          {TASKS[0].map((t, i) => <TaskButton key={i} {...t} />)}
        </div>
      </div>
      <div className="grid grid-cols-9 gap-0.5">
        {TASKS[1].map((t, i) => <TaskButton key={i} {...t} />)}
      </div>
      <div className="flex">
        {TASKS[2].map((t, i) => <TaskButton key={i} {...t} className="w-[160px]" />)}
      </div>
    </div>

    <div className="mb-1 ml-2.5 w-[3px] border border-t-white border-r-[#808080] border-b-[#808080] border-l-white" />
    <div className="flex w-[29px] flex-col items-center gap-1.5 pt-[3px]">
      <svg className="h-4 w-4" viewBox="0 0 16 16" fill="none"><rect x=".5" y=".5" width="15" height="15" fill="#d8ecfa" stroke="#2a6aa8" /><rect x="3" y="3" width="10" height="10" stroke="#2a6aa8" /><circle cx="8" cy="8" r="2.500" stroke="#204a90" strokeWidth="1.500" /><path d="M8.500 8.500l3 3" stroke="#204a90" strokeWidth="1.500" /></svg>
      <svg className="h-[18px] w-2.5" viewBox="0 0 10 18" fill="none" stroke="#000"><path d="M3.500 .5h5v3h-5zM1.500 2.500h5v3h-5z" /><path d="M2 13h5l-2.500 3z" fill="#000" stroke="none" /></svg>
    </div>
    <div className="mr-[3px] flex w-[144px] border border-t-[#808080] border-r-white border-b-white border-l-[#808080] pt-1">
      <svg className="mt-[3px] ml-1.5 h-2 w-[5px]" viewBox="0 0 5 8" fill="none" stroke="#000"><path d="M0 3l2.500-2L5 3M0 7l2.500-2L5 7" /></svg>
      <div className="ml-2.5 grid h-[66px] w-[42px] grid-cols-2 grid-rows-3 gap-x-2">
        <svg className="h-4 w-4" viewBox="0 0 16 16" fill="#fff" stroke="#555"><path d="M2.500 2.500h8v12h-8z" /><path d="M7 5h7v4l-2 2H9L7 9zM8.500 2v3M12.500 2v3M10.500 11v4" /></svg>
        <svg className="h-4 w-4" viewBox="0 0 16 16" fill="#bbb" stroke="#555"><path d="M5.500 2.500h10v9h-10zM7 14.500h8" /><path d="M1.500 1.500h4v5h-4zM3.500 7v6" fill="#fff" /></svg>
        <svg className="h-4 w-4" viewBox="0 0 16 16"><path d="M3 1h13l-3 4H6zM1 7h12l-3 4H6l-3 5z" fill="#1a8af0" /></svg>
        <svg className="h-4 w-4" viewBox="0 0 16 16" fill="#fff" stroke="#777"><path d="M1.500 6h3l4-4v12l-4-4h-3z" /><path d="M11 5c1.500 2 1.500 4 0 6M13 3c3 3 3 7 0 10" fill="none" /></svg>
        <svg className="h-4 w-4" viewBox="0 0 16 16"><path d="M0 14L11 2v9l-4 3z" fill="#e81818" /><path d="M11 3l5 12h-3l-3-4z" fill="#28c838" /></svg>
        <svg className="h-4 w-4" viewBox="0 0 16 16" fill="none"><path d="M13 2C6 1 3 5 3 9s3 5 6 5 4-2 4-5H9" stroke="#d02818" strokeWidth="3.500" /></svg>
      </div>
      <div className="ml-2 flex w-[52px] flex-col items-center gap-1 pt-[3px] leading-4 whitespace-nowrap">
        <span>10:28</span>
        <span className="text-xs leading-4">星期四</span>
        <span>2017/1/5</span>
      </div>
      <svg className="mt-[25px] ml-0.5 h-4 w-4 shrink-0" viewBox="0 0 16 16"><rect x=".5" y="1.500" width="15" height="11" fill="#1a5ac0" stroke="#456" /><path d="M1 9l14-5v8H1z" fill="#0c3a8a" /><path d="M1 12.500h14" stroke="#cde" /></svg>
    </div>
  </footer>
);

export default function App() {
  return (
    <div className="flex min-h-screen flex-col overflow-hidden bg-[#d4d0c8] text-black">
      <main className="relative flex flex-1 flex-col overflow-hidden">
        <GraphicEditor />
        <DrillToolManager />
      </main>
      <Taskbar />
    </div>
  );
}
